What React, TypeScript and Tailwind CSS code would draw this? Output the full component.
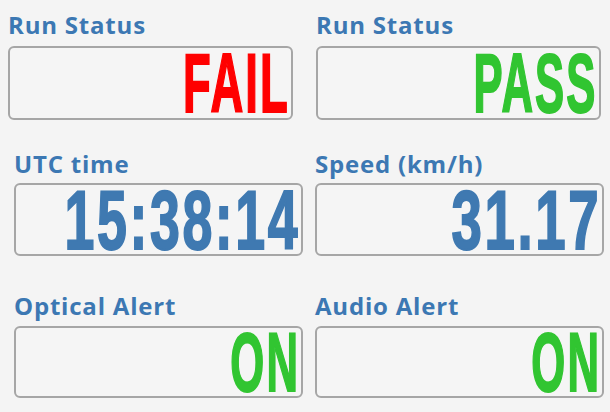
const labelFont = { fontFamily: '"Open Sans", "Noto Sans", sans-serif' };
const valueFont = { fontFamily: '"Liberation Sans", Arial, sans-serif' };

interface GaugeProps {
  label: string;
  value: string;
  valueClass: string;
  className: string;
  boxClass: string;
}

const Gauge = ({ label, value, valueClass, className, boxClass }: GaugeProps) => {
  return (
    <div className={className}>
      <div
        className="h-[26px] pt-[2px] leading-[24px] text-[24px] tracking-[0.8px] font-bold text-[#3c78b3] whitespace-nowrap"
        style={labelFont}
      >
        {label}
      </div>
      <div
        className={
          "border-2 border-[#a6a6a6] rounded-[6px] bg-[#f5f5f5] flex items-center justify-end overflow-hidden pr-[5px] " +
          boxClass
        }
      >
        <span
          className={
            "inline-block origin-right font-bold text-[84px] leading-[66px] tracking-[4px] mr-[-4px] whitespace-nowrap " +
            valueClass
          }
          style={valueFont}
        >
          {value}
        </span>
      </div>
    </div>
  );
};

export default function App() {
  return (
    <div className="w-[610px] h-[412px] bg-[#f4f4f4] overflow-hidden">
      <div className="flex pt-[11px]">
        <Gauge
          label="Run Status"
          value="FAIL"
          className="ml-[8px] w-[285px]"
          boxClass="mt-[9px] h-[74px]"
          valueClass="text-[#ff0000] scale-x-[0.54] [-webkit-text-stroke:2px_#ff0000]"
        />
        <Gauge
          label="Run Status"
          value="PASS"
          className="ml-[23px] w-[285px]"
          boxClass="mt-[9px] h-[74px]"
          valueClass="text-[#31c531] scale-x-[0.52] [-webkit-text-stroke:2px_#31c531]"
        />
      </div>
      <div className="flex pt-[30px]">
        <Gauge
          label="UTC time"
          value="15:38:14"
          className="ml-[14px] w-[289px]"
          boxClass="mt-[7px] h-[73px]"
          valueClass="text-[#3f79b1] scale-x-[0.64] [-webkit-text-stroke:2px_#3f79b1]"
        />
        <Gauge
          label="Speed (km/h)"
          value="31.17"
          className="ml-[12px] w-[289px]"
          boxClass="mt-[7px] h-[73px]"
          valueClass="text-[#3f79b1] scale-x-[0.65] [-webkit-text-stroke:2px_#3f79b1]"
        />
      </div>
      <div className="flex pt-[36px]">
        <Gauge
          label="Optical Alert"
          value="ON"
          className="ml-[14px] w-[289px]"
          boxClass="mt-[8px] h-[72px]"
          valueClass="text-[#31c531] scale-x-[0.52] [-webkit-text-stroke:2px_#31c531]"
        />
        <Gauge
          label="Audio Alert"
          value="ON"
          className="ml-[12px] w-[289px]"
          boxClass="mt-[8px] h-[72px]"
          valueClass="text-[#31c531] scale-x-[0.52] [-webkit-text-stroke:2px_#31c531]"
        />
      </div>
    </div>
  );
}
